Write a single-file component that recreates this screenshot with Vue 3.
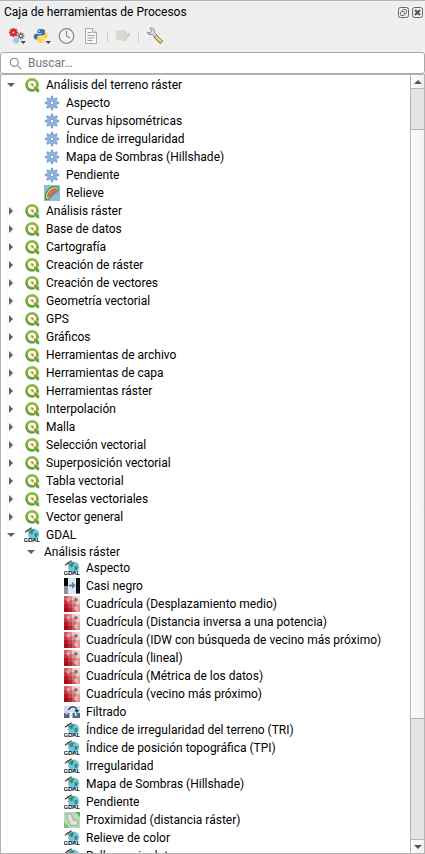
<script setup>
import { computed, ref } from 'vue'

const query = ref('')

const leaf = (label, icon) => ({ label, icon })
const group = (label) => ({ label, icon: 'qgis', open: false, children: [] })

const tree = ref([
  {
    label: 'Análisis del terreno ráster', icon: 'qgis', open: true,
    children: [
      leaf('Aspecto', 'gear'),
      leaf('Curvas hipsométricas', 'gear'),
      leaf('Índice de irregularidad', 'gear'),
      leaf('Mapa de Sombras (Hillshade)', 'gear'),
      leaf('Pendiente', 'gear'),
      leaf('Relieve', 'relief'),
    ],
  },
  ...[
    'Análisis ráster', 'Base de datos', 'Cartografía', 'Creación de ráster',
    'Creación de vectores', 'Geometría vectorial', 'GPS', 'Gráficos',
    'Herramientas de archivo', 'Herramientas de capa', 'Herramientas ráster',
    'Interpolación', 'Malla', 'Selección vectorial', 'Superposición vectorial',
    'Tabla vectorial', 'Teselas vectoriales', 'Vector general',
  ].map(group),
  {
    label: 'GDAL', icon: 'gdal', open: true,
    children: [
      {
        label: 'Análisis ráster', icon: null, open: true,
        children: [
          leaf('Aspecto', 'gdal'),
          leaf('Casi negro', 'nearblack'),
          leaf('Cuadrícula (Desplazamiento medio)', 'grid'),
          leaf('Cuadrícula (Distancia inversa a una potencia)', 'grid'),
          leaf('Cuadrícula (IDW con búsqueda de vecino más próximo)', 'grid'),
          leaf('Cuadrícula (lineal)', 'grid'),
          leaf('Cuadrícula (Métrica de los datos)', 'grid'),
          leaf('Cuadrícula (vecino más próximo)', 'grid'),
          leaf('Filtrado', 'sieve'),
          leaf('Índice de irregularidad del terreno (TRI)', 'gdal'),
          leaf('Índice de posición topográfica (TPI)', 'gdal'),
          leaf('Irregularidad', 'gdal'),
          leaf('Mapa de Sombras (Hillshade)', 'gdal'),
          leaf('Pendiente', 'gdal'),
          leaf('Proximidad (distancia ráster)', 'proximity'),
          leaf('Relieve de color', 'gdal'),
          leaf('Rellenar sin datos', 'gdal'),
        ],
      },
    ],
  },
])

const rows = computed(() => {
  const out = []
  const needle = query.value.trim().toLowerCase()
  const matches = (n) =>
    !needle || n.label.toLowerCase().includes(needle) || (n.children || []).some(matches)
  const walk = (nodes, depth) => {
    for (const node of nodes) {
      if (!matches(node)) continue
      out.push({ node, depth })
      if (node.children && node.open) walk(node.children, depth + 1)
    }
  }
  walk(tree.value, 0)
  return out
})
</script>

<template>
  <svg class="defs" aria-hidden="true">
    <defs>
      <linearGradient id="g-ring" x1="0" y1="0" x2="0" y2="1">
        <stop offset="0" stop-color="#8dbb3c" />
        <stop offset="1" stop-color="#659f2c" />
      </linearGradient>
      <symbol id="i-qgis" viewBox="0 0 16 16">
        <circle cx="8" cy="7.8" r="5.5" fill="#fff" stroke="url(#g-ring)" stroke-width="2.8" />
        <path d="M9.2 9.2h3l3.3 3.3v3h-2.6L9.2 11.8z" fill="#fff" />
        <path d="M10 9.6h2.2l3 3v2.6h-2.1L10 12z" fill="#6aa433" />
        <path d="M6.2 6h2.6l1.6 1.7v2.1H8.6L6.2 7.8z" fill="#f6c98c" />
        <path d="M7.4 6.8h1.8v2.3H7.8z" fill="#e8792a" />
      </symbol>
      <symbol id="i-gear" viewBox="0 0 16 16">
        <g stroke="#7ea4d3" stroke-width="2.3">
          <path d="M8 .8v14.4M.8 8h14.4M2.9 2.9l10.2 10.2M13.1 2.9L2.9 13.1" />
        </g>
        <circle cx="8" cy="8" r="5" fill="#8fb3de" stroke="#7ba1d0" stroke-width=".6" />
        <circle cx="8" cy="8" r="1.7" fill="#fff" stroke="#6a92c3" stroke-width=".8" />
      </symbol>
      <symbol id="i-relief" viewBox="0 0 16 16">
        <path d="M0 0h16v16H0z" fill="#93b9e0" />
        <path d="M1.2 14.8C-.3 10 3 2.3 8.5 1.2c3.2-.7 6.8-.4 6.6 2.9-.2 3.6-5.1 4.6-7.5 7.9-1.6 2.2-3.3 4.2-6.4 2.8z" fill="#4f9a2c" />
        <path d="M2 13.4C1.5 9.5 4.6 3.5 9 2.6c2.9-.6 5-.2 4.8 1.7-.3 2.7-4.9 3.7-7.4 6.9-1.5 2-2.5 3.3-4.4 2.2z" fill="#d3dc7c" />
        <path d="M3.6 11.7C3.6 8.6 6.4 4.8 9.4 4c1.8-.4 3.6-.2 3.3 1-.5 1.8-4.1 3-6.3 5.4-1 1.1-2 2.1-2.8 1.3z" fill="#d9737b" stroke="#a9493f" stroke-width=".7" />
      </symbol>
      <symbol id="i-gdal" viewBox="0 0 16 16">
        <circle cx="9.6" cy="7.2" r="5.6" fill="#6cc3e6" />
        <path d="M6 3.4c1.4-1 2.6-1.2 3.6-.9l.6 1.2-1.6 1.5.4 1.6-1.5.4L5.4 6z" fill="#3d8a5a" />
        <path d="M10.4 6.2l2.2-.2 1.2 1.6-1.2 2.4h-1.6z" fill="#3d8a5a" />
        <path d="M1 5.2L7.6.7" stroke="#333" stroke-width="1.3" />
        <path d="M3.2 2.2l2 3" stroke="#666" />
        <text x="7.6" y="14.8" text-anchor="middle" class="gdal-text">GDAL</text>
      </symbol>
      <symbol id="i-nearblack" viewBox="0 0 16 16">
        <path d="M0 0h16v16H0z" fill="#d9e8f4" />
        <path d="M0 0h4v8H0z" fill="#050505" />
        <path d="M0 8h4v8H0z" fill="#8d9296" />
        <path d="M12 0h4v15h-4z" fill="#0b0d10" />
        <path d="M12 15h4v1h-4z" fill="#75797c" />
        <path d="M5 6.4h3V3.8L11.6 7.4 8 11V8.6H5z" fill="#5f82a1" />
      </symbol>
      <symbol id="i-grid" viewBox="0 0 16 16">
        <path d="M0 0h16v16H0z" fill="#d4797c" />
        <path d="M0 0h4v4H0z" fill="#d2595f" />
        <path d="M4 0h4v4H4z" fill="#dd8a8c" />
        <path d="M8 0h4v4H8z" fill="#edc3c3" />
        <path d="M12 0h4v4h-4z" fill="#f3dada" />
        <path d="M0 4h4v4H0z" fill="#c23a41" />
        <path d="M4 4h4v4H4z" fill="#cf6166" />
        <path d="M8 4h4v4H8z" fill="#dc9092" />
        <path d="M12 4h4v4h-4z" fill="#eccaca" />
        <path d="M0 8h4v4H0z" fill="#b11a23" />
        <path d="M4 8h4v4H4z" fill="#c0444a" />
        <path d="M8 8h4v4H8z" fill="#cd6e71" />
        <path d="M12 8h4v4h-4z" fill="#dda0a1" />
        <path d="M0 12h4v4H0z" fill="#a90c15" />
        <path d="M4 12h4v4H4z" fill="#b5262e" />
        <path d="M8 12h4v4H8z" fill="#c4575b" />
        <path d="M12 12h4v4h-4z" fill="#d99899" />
        <circle cx="4.2" cy="3.8" r="1.3" fill="#d3757a" stroke="#f3cfd0" stroke-width=".8" />
        <circle cx="12" cy="3.8" r="1.8" fill="#7b7575" />
        <circle cx="12" cy="12.6" r="1.4" fill="#d69495" stroke="#f6e4e4" stroke-width=".8" />
      </symbol>
      <symbol id="i-sieve" viewBox="0 0 16 16">
        <path d="M0 2h16v12H0z" fill="#c3e0f7" />
        <path d="M0 9h16v5H0z" fill="#4c6a86" />
        <path d="M5.5 8h3v6h-3zM11 8h1.6v4H11z" fill="#eef6fc" />
        <circle cx="2.8" cy="8.6" r="1.8" fill="#f2b9b5" />
        <path d="M4.5 6C5.5 3.4 7.3 2.8 9 2.9c2.4.1 3.6 1.6 3.8 3.6" fill="none" stroke="#333f4a" stroke-width="1.4" />
        <path d="M10.4 6h4.8l-2.4 3.2z" fill="#2c3c4b" />
      </symbol>
      <symbol id="i-proximity" viewBox="0 0 16 16">
        <path d="M0 0h16v16H0z" fill="#b4dfb4" />
        <path d="M11 0h5v5z" fill="#5fa763" />
        <path d="M0 10l6 6H0z" fill="#7cbd7e" />
        <path d="M2.6 2h4.6l2.2 6 4.2 1v4l-6.6.6-2.6-4.2z" fill="#e2e2e2" stroke="#a9aaa9" stroke-width="1.1" />
      </symbol>
    </defs>
  </svg>

  <section class="panel">
    <header class="title-bar">
      <h1>Caja de herramientas de Procesos</h1>
      <button class="win" type="button" aria-label="Desacoplar">
        <svg viewBox="0 0 11 11"><rect x=".5" y=".5" width="10" height="10" rx="2" /><rect x="4.5" y="2.5" width="4" height="4" rx="1" /><rect class="fill" x="2.5" y="4.5" width="4" height="4" rx="1" /></svg>
      </button>
      <button class="win" type="button" aria-label="Cerrar">
        <svg viewBox="0 0 11 11"><rect x=".5" y=".5" width="10" height="10" rx="2" /><path class="cross" d="M3 3l5 5M8 3l-5 5" /></svg>
      </button>
    </header>

    <div class="toolbar" role="toolbar">
      <button type="button" aria-label="Modelos">
        <svg viewBox="0 0 18 18">
          <path d="M5.5 1v9M1 5.5h9M2.3 2.3l6.4 6.4M8.7 2.3L2.3 8.7" stroke="#d0242b" stroke-width="2" />
          <circle cx="5.5" cy="5.5" r="3" fill="#d0242b" /><circle cx="5.5" cy="5.5" r="1.1" fill="#f5dede" />
          <path d="M12.8 5.2v7.4M9.1 8.9h7.4M10.2 6.3l5.2 5.2M15.4 6.3l-5.2 5.2" stroke="#777" stroke-width="1.4" />
          <circle cx="12.8" cy="8.9" r="2.3" fill="#777" /><circle cx="12.8" cy="8.9" r="1" fill="#eee" />
          <path d="M8 10.2v6.6M4.7 13.5h6.6M5.7 11.2l4.6 4.6M10.3 11.2l-4.6 4.6" stroke="#9cbbe6" stroke-width="1.4" />
          <circle cx="8" cy="13.5" r="2.2" fill="#a8c3eb" />
          <path d="M12.5 14h5.5l-2.7 3z" fill="#4a4a4a" />
        </svg>
      </button>
      <button type="button" aria-label="Scripts">
        <svg viewBox="0 0 18 18">
          <path d="M7.5 2C4.6 2 4.4 3 4.4 4.2V6h4v.7H3C1.5 6.7.7 7.8.7 9.4s.8 3 2.3 3h1.4v-1.7c0-1.5 1-2.3 2.4-2.3h3.4c1.1 0 1.8-.8 1.8-1.9V4.2C12 2.4 10.5 2 7.5 2z" fill="#3977a8" />
          <path d="M8.3 16c2.9 0 3.1-1 3.1-2.2V12h-4v-.7h5.4c1.5 0 1.9-1.3 1.9-2.9s-.6-2.9-1.9-2.9H12v1.7c0 1.5-1 2.3-2.4 2.3H6.2c-1.1 0-1.8.8-1.8 1.9v2.4c0 1.8 1 2.2 3.9 2.2z" fill="#ffd33c" />
          <circle cx="6.3" cy="4" r=".7" fill="#fff" /><circle cx="9.5" cy="14.2" r=".7" fill="#fff" />
          <path d="M12.5 14h5.5l-2.7 3z" fill="#4a4a4a" />
        </svg>
      </button>
      <button type="button" aria-label="Historial">
        <svg viewBox="0 0 18 18"><circle cx="8.5" cy="9" r="7.3" fill="#f3f3f3" stroke="#858585" stroke-width="1.2" /><path d="M8.5 3.8V9l3.5 2" fill="none" stroke="#888" stroke-width="1.2" /></svg>
      </button>
      <button type="button" aria-label="Visor de resultados">
        <svg viewBox="0 0 18 18"><path d="M2.5 1.5h7l4 4v11h-11z" fill="#f8f8f8" stroke="#aaa" /><path d="M9.5 1.5v4h4" fill="#ddd" stroke="#aaa" /><path d="M4.5 5.5h4M4.5 8.5h7M4.5 11h7M4.5 13.5h5" stroke="#9b9b9b" stroke-width="1.2" /></svg>
      </button>
      <i class="sep"></i>
      <button type="button" aria-label="Editar objetos en el sitio" disabled>
        <svg viewBox="0 0 18 18"><path d="M2 3.5h10l1 2v8H5l-3-2z" fill="#d8d8d1" /><path d="M9 15l1-3.5 4.5-6 2 1.5-4.7 6z" fill="#cbcbc6" /><path d="M9.5 13.5l3.5-4" stroke="#e8e8e3" /></svg>
      </button>
      <i class="sep"></i>
      <button type="button" aria-label="Opciones">
        <svg viewBox="0 0 18 18">
          <path d="M9.8 8.7l7 6.8" stroke="#7d7346" stroke-width="4" />
          <path d="M10.2 9l6.2 6" stroke="#f1dc82" stroke-width="2.4" />
          <path d="M5 1.3c2-.6 4 .3 4.4 2 .2.9 0 1.6-.2 2.2l2.5 2.4-2 2-2.4-2.5C5 8.3 3 7.3 2.4 5.2l2.5 1 1.8-1.8z" fill="#e2e2e2" stroke="#777" stroke-width=".9" />
        </svg>
      </button>
    </div>

    <label class="search">
      <svg viewBox="0 0 14 14"><circle cx="5.7" cy="5.7" r="4.4" /><path d="M9 9l4 4" /></svg>
      <input v-model="query" type="text" placeholder="Buscar…" aria-label="Buscar" />
    </label>

    <div class="view">
      <ul class="tree" role="tree">
        <li
          v-for="(row, i) in rows"
          :key="i"
          class="row"
          :class="['depth-' + row.depth, { plain: !row.node.icon }]"
          role="treeitem"
        >
          <button
            v-if="row.node.children"
            class="toggle"
            type="button"
            :aria-expanded="row.node.open"
            :aria-label="row.node.label"
            @click="row.node.open = !row.node.open"
          >
            <svg v-if="row.node.open" viewBox="0 0 8 8"><path d="M0 2h8L4 6z" /></svg>
            <svg v-else viewBox="0 0 8 8"><path d="M2 0v8l4-4z" /></svg>
          </button>
          <span v-else class="toggle"></span>
          <svg v-if="row.node.icon" class="icon"><use :href="'#i-' + row.node.icon" /></svg>
          <span class="label">{{ row.node.label }}</span>
        </li>
      </ul>
      <div class="scrollbar">
        <button type="button" aria-label="Subir"><svg viewBox="0 0 8 8"><path d="M0 6h8L4 2z" /></svg></button>
        <div class="before"></div>
        <div class="thumb"></div>
        <div class="after"></div>
        <button type="button" aria-label="Bajar"><svg viewBox="0 0 8 8"><path d="M0 2h8L4 6z" /></svg></button>
      </div>
    </div>
  </section>
</template>

<style>
body {
  margin: 0;
  background: #efefef;
}
</style>

<style scoped>
.defs {
  position: absolute;
  width: 0;
  height: 0;
}
.gdal-text {
  font: 900 6px Lato, "Liberation Sans", sans-serif;
  fill: #111;
}
.panel {
  box-sizing: border-box;
  height: 100vh;
  display: flex;
  flex-direction: column;
  border-top: 1px solid #b4b4b4;
  background: #efefef;
  color: #000;
  font: 12px/18px Roboto, "Open Sans", sans-serif;
}
button {
  display: flex;
  align-items: center;
  justify-content: center;
  padding: 0;
  border: 0;
  background: none;
}
.title-bar {
  display: flex;
  align-items: center;
  gap: 3px;
  height: 22px;
  padding: 0 2px 0 4px;
}
.title-bar h1 {
  flex: 1;
  margin: 0;
  font: inherit;
}
.win svg {
  width: 11px;
  height: 11px;
  fill: none;
  stroke: #666;
}
.win .fill {
  fill: #efefef;
}
.win .cross {
  stroke: #555;
  stroke-width: 2;
}
.toolbar {
  display: flex;
  align-items: center;
  gap: 7px;
  height: 26px;
  padding: 0 0 3px 8px;
}
.toolbar svg {
  width: 18px;
  height: 18px;
}
.sep {
  width: 1px;
  height: 11px;
  margin: 0 -1px;
  background: #ccc;
}
.search {
  display: flex;
  align-items: center;
  gap: 6px;
  box-sizing: border-box;
  height: 22px;
  padding: 0 8px;
  border: 1px solid #a9a9a9;
  border-radius: 3px;
  background: #fff;
}
.search svg {
  width: 13px;
  height: 13px;
  fill: none;
  stroke: #888;
  stroke-width: 1.2;
}
.search input {
  flex: 1;
  min-width: 0;
  padding: 0;
  border: 0;
  outline: 0;
  background: none;
  color: #000;
  font: inherit;
}
.search input::placeholder {
  color: #777;
  opacity: 1;
}
.view {
  flex: 1;
  min-height: 0;
  display: flex;
  border: 1px solid #b4b4b4;
  background: #fff;
}
.tree {
  flex: 1;
  min-width: 0;
  margin: 0;
  padding: 1px 0 0 5px;
  overflow: hidden;
  list-style: none;
}
.row {
  display: flex;
  align-items: center;
  height: 18px;
  white-space: nowrap;
}
.row.plain {
  height: 15px;
}
.depth-1 {
  padding-left: 20px;
}
.depth-2 {
  padding-left: 40px;
}
.toggle {
  width: 10px;
  height: 14px;
  margin-right: 8px;
}
.toggle svg {
  width: 8px;
  height: 8px;
  fill: #606060;
}
.icon {
  width: 16px;
  height: 16px;
  margin-right: 6px;
}
.scrollbar {
  display: flex;
  flex-direction: column;
  width: 13px;
  border-left: 1px solid #b4b4b4;
  background: #e4e4e4;
}
.scrollbar button {
  height: 13px;
  background: linear-gradient(90deg, #fff, #f0f0f0);
}
.scrollbar svg {
  width: 8px;
  height: 8px;
  fill: #555;
}
.before {
  flex: 40;
  border-top: 1px solid #b4b4b4;
}
.thumb {
  flex: 589;
  border: solid #b4b4b4;
  border-width: 1px 0;
  background: linear-gradient(90deg, #fff, #f0f0f0);
}
.after {
  flex: 120;
  border-bottom: 1px solid #b4b4b4;
}
</style>
